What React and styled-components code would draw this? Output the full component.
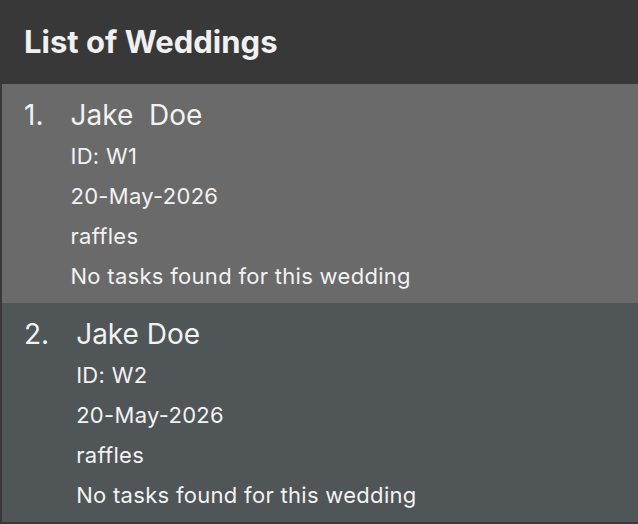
import React from 'react';
import styled, { createGlobalStyle } from 'styled-components';

const weddings = [
    { name: 'Jake  Doe', id: 'W1', date: '20-May-2026', venue: 'raffles', selected: true },
    { name: 'Jake Doe', id: 'W2', date: '20-May-2026', venue: 'raffles', selected: false },
];

function App() {
    return (
        <Page>
            <GlobalStyle />
            <Header>
                <Title>List of Weddings</Title>
            </Header>
            <List>
                {weddings.map((w, i) => (
                    <Cell key={w.id} selected={w.selected}>
                        <Index>{i + 1}.</Index>
                        <Details>
                            <Name>{w.name}</Name>
                            <Field>ID: {w.id}</Field>
                            <Field>{w.date}</Field>
                            <Field>{w.venue}</Field>
                            <Field>No tasks found for this wedding</Field>
                        </Details>
                    </Cell>
                ))}
            </List>
        </Page>
    );
}

const GlobalStyle = createGlobalStyle`
    html, body {
        margin: 0;
        padding: 0;
        background: #383838;
    }
    * {
        box-sizing: border-box;
    }
`;

const Page = styled.div`
    display: flex;
    flex-direction: column;
    width: 638px;
    height: 524px;
    overflow: hidden;
    background: #383838;
    font-family: Inter, "Noto Sans", sans-serif;
    color: #f2f2f2;
`;

const Header = styled.div`
    display: flex;
    align-items: center;
    height: 84px;
    padding: 0 24px 2px;
`;

const Title = styled.h1`
    margin: 0;
    font-size: 31px;
    font-weight: 700;
    color: #f0f0f0;
`;

const List = styled.div`
    display: flex;
    flex-direction: column;
    padding-left: 2px;
`;

const Cell = styled.div`
    display: flex;
    flex-direction: row;
    gap: 27px;
    height: 219px;
    padding: 11px 0 0 22px;
    background: ${({ selected }) => (selected ? '#6a6a6a' : '#505558')};
`;

const Index = styled.div`
    font-size: 28px;
    line-height: 41px;
    white-space: pre;
`;

const Details = styled.div`
    display: flex;
    flex-direction: column;
`;

const Name = styled.div`
    font-size: 28px;
    line-height: 41px;
    white-space: pre;
`;

const Field = styled.div`
    font-size: 22px;
    line-height: 40px;
    letter-spacing: 0.3px;
`;

export default App;
